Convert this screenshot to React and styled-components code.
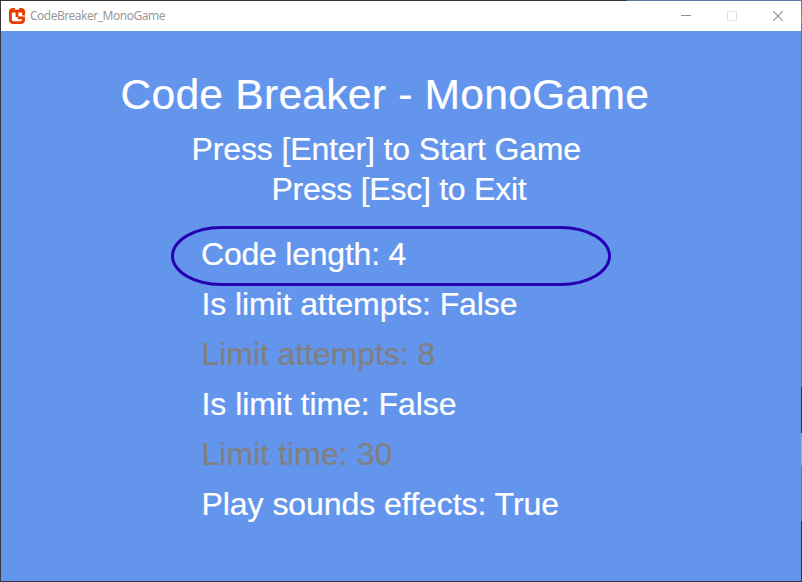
import React from 'react';
import styled, { createGlobalStyle } from 'styled-components';

const GlobalStyle = createGlobalStyle`
  body { margin: 0; overflow: hidden; }
  * { box-sizing: border-box; }
`;

const Desktop = styled.div`
  width: 802px;
  height: 582px;
  padding: 1px;
  background:
    linear-gradient(90deg, #383438 627px, #6077ab 627px) 0 0 / 100% 1px no-repeat,
    linear-gradient(#6077ab 15px, #8a909c 15px 24px, #5a75ad 24px 387px, #30343f 387px 433px, #a6a8aa 433px 465px, #5b78b4 465px 521px, #30343f 521px) 100% 0 / 1px 100% no-repeat,
    #38383d;
`;

const GameWindow = styled.main`
  display: flex;
  flex-direction: column;
  height: 580px;
  background: #6495ed;
`;

const TitleBar = styled.header`
  display: flex;
  align-items: center;
  height: 30px;
  padding-left: 8px;
  background: #fff;
`;

const Caption = styled.span`
  flex: 1;
  padding-left: 5px;
  font: 12px/30px 'Noto Sans', sans-serif;
  letter-spacing: -0.49px;
  color: #999;
  white-space: nowrap;
`;

const WindowButton = styled.button`
  display: grid;
  place-items: center;
  width: 46px;
  height: 30px;
  padding: 0;
  border: 0;
  background: none;
  color: ${({ $dim }) => ($dim ? '#e6e6e6' : '#8f8f8f')};
`;

const Screen = styled.section`
  display: flex;
  flex-direction: column;
  padding-top: 39px;
  font-family: 'Liberation Sans', Arial, sans-serif;
  color: #fff;
  -webkit-text-stroke: 0.2px currentColor;
  white-space: nowrap;
`;

const Title = styled.h1`
  margin: 0 0 11px 119.5px;
  font-size: 42.67px;
  font-weight: 400;
  line-height: 48px;
  letter-spacing: ${({ $track }) => $track}px;
`;

const Prompt = styled.p`
  margin: 0 0 0 ${({ $indent }) => $indent}px;
  font-size: 32px;
  line-height: 40px;
  letter-spacing: ${({ $track }) => $track}px;
`;

const Options = styled.ul`
  width: 440px;
  margin: 20px 0 0 170px;
  padding: 0;
  list-style: none;
`;

const Option = styled.li`
  position: relative;
  height: 50px;
  padding-left: ${({ $selected }) => ($selected ? 30 : 30.5)}px;
  font-size: 32px;
  line-height: 50px;
  letter-spacing: ${({ $track }) => $track}px;
  color: ${({ $disabled }) => ($disabled ? '#808080' : '#fff')};
`;

const Selection = styled.span`
  position: absolute;
  inset: -3px 0 -7px;
  border: 3px solid #2600b3;
  border-radius: 50px / 30px;
`;

const options = [
  { label: 'Code length', value: '4', selected: true, track: -0.22 },
  { label: 'Is limit attempts', value: 'False', track: -0.1 },
  { label: 'Limit attempts', value: '8', disabled: true, track: -0.06 },
  { label: 'Is limit time', value: 'False', track: -0.05 },
  { label: 'Limit time', value: '30', disabled: true, track: 0.04 },
  { label: 'Play sounds effects', value: 'True', track: -0.05 },
];

const Logo = () => (
  <svg width="16" height="16" viewBox="0 0 16 16" fill="none" stroke="#e73c00" strokeWidth="2.8">
    <path d="M8 9V1.8M8 3.2H4.2Q1.4 3.2 1.4 5V11.6Q1.4 14.6 4.4 14.6H11.6Q14.6 14.6 14.6 11.6V9.8H8.8" />
    <path d="M8 3.2H12Q14.6 3.2 14.6 5V7.4" />
    <path d="M1.4 5V4Q1.4 1.4 4 1.4H5.8M10.2 1.4H12Q14.6 1.4 14.6 4V5" />
  </svg>
);

export default function App() {
  return (
    <>
      <GlobalStyle />
      <Desktop>
        <GameWindow>
          <TitleBar>
            <Logo />
            <Caption>CodeBreaker_MonoGame</Caption>
            <WindowButton aria-label="Minimize">
              <svg width="10" height="10"><path d="M0 4.5h10" stroke="currentColor" /></svg>
            </WindowButton>
            <WindowButton aria-label="Maximize" $dim>
              <svg width="10" height="10"><rect x=".5" y=".5" width="9" height="9" fill="none" stroke="currentColor" /></svg>
            </WindowButton>
            <WindowButton aria-label="Close">
              <svg width="10" height="10"><path d="M0 0l10 10M10 0L0 10" stroke="currentColor" strokeWidth="1.1" /></svg>
            </WindowButton>
          </TitleBar>
          <Screen>
            <Title $track={0.2}>Code Breaker - MonoGame</Title>
            <Prompt $indent={190.5} $track={-0.13}>Press [Enter] to Start Game</Prompt>
            <Prompt $indent={270.5} $track={-0.25}>Press [Esc] to Exit</Prompt>
            <Options>
              {options.map(({ label, value, selected, disabled, track }) => (
                <Option key={label} $selected={selected} $disabled={disabled} $track={track}>
                  {selected && <Selection />}
                  {label}: {value}
                </Option>
              ))}
            </Options>
          </Screen>
        </GameWindow>
      </Desktop>
    </>
  );
}
